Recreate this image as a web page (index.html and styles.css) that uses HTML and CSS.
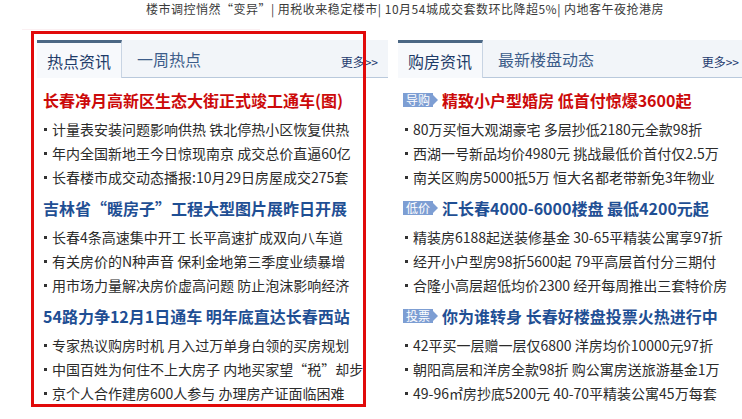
FILE: index.html
```html
<!DOCTYPE html>
<html lang="zh-CN">
<head>
<meta charset="utf-8">
<title>热点资讯</title>
<link rel="stylesheet" href="styles.css">
</head>
<body>
<div class="topnews">楼市调控悄然“变异”| 用税收来稳定楼市| 10月54城成交套数环比降超5%| 内地客午夜抢港房</div>
<div class="faint"></div>
<div class="main">
  <div class="panel">
    <div class="tabs">
      <span class="tab active">热点资讯</span>
      <span class="tab">一周热点</span>
      <span class="more">更多&gt;&gt;</span>
    </div>
    <div class="body">
      <div class="sec">
        <div class="head red">长春净月高新区生态大街正式竣工通车(图)</div>
        <div class="item">计量表安装问题影响供热 铁北停热小区恢复供热</div>
        <div class="item">年内全国新地王今日惊现南京 成交总价直逼60亿</div>
        <div class="item">长春楼市成交动态播报:10月29日房屋成交275套</div>
      </div>
      <div class="sec">
        <div class="head blue">吉林省“暖房子”工程大型图片展昨日开展</div>
        <div class="item">长春4条高速集中开工 长平高速扩成双向八车道</div>
        <div class="item">有关房价的N种声音 保利金地第三季度业绩暴增</div>
        <div class="item">用市场力量解决房价虚高问题 防止泡沫影响经济</div>
      </div>
      <div class="sec">
        <div class="head blue">54路力争12月1日通车 明年底直达长春西站</div>
        <div class="item">专家热议购房时机 月入过万单身白领的买房规划</div>
        <div class="item">中国百姓为何住不上大房子 内地买家望“税”却步</div>
        <div class="item">京个人合作建房600人参与 办理房产证面临困难</div>
      </div>
    </div>
  </div>
  <div class="panel">
    <div class="tabs">
      <span class="tab active">购房资讯</span>
      <span class="tab">最新楼盘动态</span>
      <span class="more">更多&gt;&gt;</span>
    </div>
    <div class="body">
      <div class="sec">
        <div class="head red"><span class="badge">导购</span>精致小户型婚房 低首付惊爆3600起</div>
        <div class="item">80万买恒大观湖豪宅 多层抄低2180元全款98折</div>
        <div class="item">西湖一号新品均价4980元 挑战最低价首付仅2.5万</div>
        <div class="item">南关区购房5000抵5万 恒大名都老带新免3年物业</div>
      </div>
      <div class="sec">
        <div class="head blue"><span class="badge">低价</span>汇长春4000-6000楼盘 最低4200元起</div>
        <div class="item">精装房6188起送装修基金 30-65平精装公寓享97折</div>
        <div class="item">经开小户型房98折5600起 79平高层首付分三期付</div>
        <div class="item">合隆小高层超低均价2300 经开每周推出三套特价房</div>
      </div>
      <div class="sec">
        <div class="head blue"><span class="badge">投票</span>你为谁转身 长春好楼盘投票火热进行中</div>
        <div class="item">42平买一层赠一层仅6800 洋房均价10000元97折</div>
        <div class="item">朝阳高层和洋房全款98折 购公寓房送旅游基金1万</div>
        <div class="item">49-96㎡房抄底5200元 40-70平精装公寓45万每套</div>
      </div>
    </div>
  </div>
</div>
<div class="highlight"></div>
</body>
</html>
```
FILE: styles.css
```css
html, body {
  margin: 0;
  padding: 0;
  background: #ffffff;
}
body {
  width: 742px;
  height: 419px;
  overflow: hidden;
  position: relative;
  font-family: "Noto Sans CJK SC", "Noto Sans", sans-serif;
  color: #2b2b2b;
}
.topnews {
  height: 18px;
  line-height: 18px;
  font-size: 12px;
  letter-spacing: 0.5px;
  color: #3a3a3a;
  text-align: center;
  padding-left: 68px;
  white-space: nowrap;
}
.faint {
  margin: 11px 0 0 22px;
  width: 238px;
  height: 1px;
  background: #fbf0f2;
}
.main {
  display: flex;
  gap: 10px;
  margin: 10px 0 0 37px;
  width: 712px;
}
.panel {
  flex: 0 0 351px;
  width: 351px;
}
.tabs {
  display: flex;
  align-items: stretch;
  height: 37px;
  background: #f2f5f9;
  border-bottom: 1px solid #b9c9dc;
}
.tab {
  display: flex;
  align-items: center;
  padding: 0 15px;
  font-size: 16px;
  color: #3d5d8a;
  white-space: nowrap;
}
.tab.active {
  padding: 0 10px;
  background: #f7f9fc;
  color: #1e3b68;
  border-top: 3px solid #4b6784;
  border-right: 1px solid #c8d4e3;
  margin-bottom: -1px;
  height: 35px;
}
.more {
  margin-left: auto;
  padding: 10px 10px 0 0;
  font-size: 12px;
  line-height: 24px;
  color: #1e3a6e;
  white-space: nowrap;
}
.body {
  padding-top: 5px;
}
.sec + .sec {
  margin-top: 2px;
}
.head {
  display: flex;
  align-items: center;
  height: 34px;
  padding-left: 6px;
  font-size: 16px;
  font-weight: 700;
  white-space: nowrap;
}
.red { color: #cc0a0a; }
.blue { color: #1f4f94; }
.badge {
  position: relative;
  display: inline-flex;
  align-items: center;
  justify-content: center;
  width: 30px;
  height: 14px;
  margin: 0 9px 0 -1px;
  background: #7d9ed3;
  color: #ffffff;
  font-size: 12px;
  font-weight: 400;
  line-height: 14px;
}
.badge::after {
  content: "";
  position: absolute;
  left: 30px;
  top: 2px;
  border-left: 5px solid #7d9ed3;
  border-top: 5px solid transparent;
  border-bottom: 5px solid transparent;
}
.item {
  display: flex;
  align-items: center;
  height: 24px;
  padding-left: 7px;
  font-size: 14px;
  color: #2b2b2b;
  white-space: nowrap;
}
.item::before {
  content: "";
  flex: 0 0 3px;
  width: 3px;
  height: 3px;
  margin-right: 5px;
  background: #333333;
}
.highlight {
  position: absolute;
  left: 31px;
  top: 31px;
  width: 329px;
  height: 370px;
  border: 3px solid #e10a0a;
  pointer-events: none;
}
```
